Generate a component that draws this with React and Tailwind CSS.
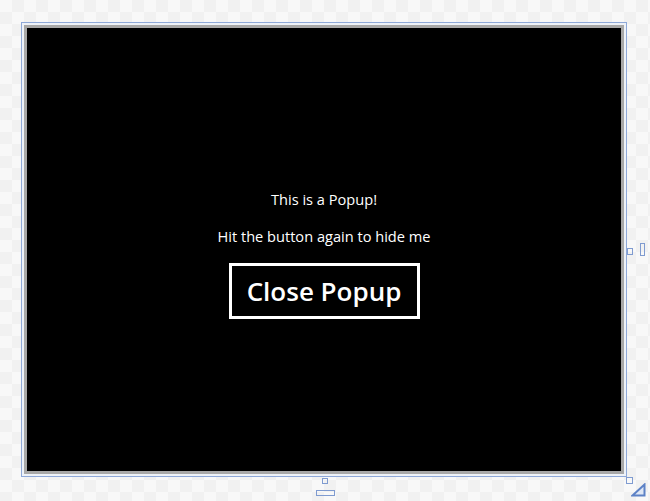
export default function App() {
  return (
    <div className="relative w-[650px] h-[501px] overflow-hidden bg-[#f5f5f5] bg-[conic-gradient(#f1f1f1_25%,#f8f8f8_0_50%,#f1f1f1_0_75%,#f8f8f8_0)] bg-[length:24px_24px]">
      <div className="ml-[21px] mt-[22px] w-[606px] h-[455px] border border-[#8ea8d8] bg-[#eef2f8] p-[2px]">
        <div className="w-full h-full border-[3px] border-[#a8a8a8] bg-black flex flex-col items-center justify-center pt-[8px] text-white font-['Open_Sans',sans-serif]">
          <div className="text-[14.6px] leading-[20px]">This is a Popup!</div>
          <div className="text-[14.6px] leading-[20px] mt-[17px]">Hit the button again to hide me</div>
          <div className="mt-[17px] w-[191px] h-[56px] border-[3px] border-white flex items-center justify-center text-[26px] font-semibold leading-none">
            Close Popup
          </div>
        </div>
      </div>
      {/* right handles */}
      <div className="absolute left-[627px] top-[248px] w-[6px] h-[7px] border border-[#7f9bd0]" />
      <div className="absolute left-[640px] top-[243px] w-[5px] h-[13px] border border-[#7f9bd0]" />
      {/* bottom handles */}
      <div className="absolute left-[322px] top-[478px] w-[6px] h-[6px] border border-[#7f9bd0]" />
      <div className="absolute left-[316px] top-[490px] w-[19px] h-[6px] border border-[#7f9bd0]" />
      {/* corner handles */}
      <div className="absolute left-[626px] top-[477px] w-[7px] h-[7px] border border-[#7f9bd0] bg-[#f8f8f8]" />
      <svg className="absolute left-[631px] top-[483px]" width="15" height="14" viewBox="0 0 15 14">
        <path d="M13.5 1.5 L13.5 12.5 L1.5 12.5 Z" fill="#dfe7f5" stroke="#5d82c6" strokeWidth="2" strokeLinejoin="miter" />
      </svg>
    </div>
  );
}
